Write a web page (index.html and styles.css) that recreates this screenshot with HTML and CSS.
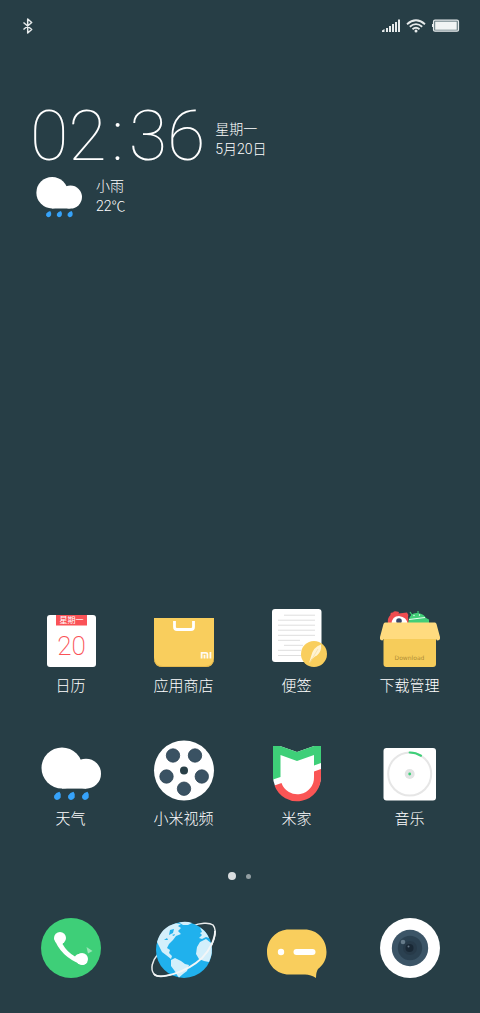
FILE: index.html
```html
<!DOCTYPE html>
<html lang="zh-CN">
<head>
    <meta charset="UTF-8">
    <meta name="viewport" content="width=device-width, initial-scale=1.0">
    <title>桌面</title>
    <link rel="stylesheet" href="styles.css">
</head>
<body>
    <header class="status-bar">
        <svg class="bluetooth" width="12" height="16" viewBox="0 0 12 16">
            <path d="M1.500 4.500 L9.700 11.500 L5.700 15 V1 L9.700 4.500 L1.500 11.500" fill="none" stroke="#e6eaeb" stroke-width="1.500" stroke-linejoin="round"/>
        </svg>
        <div class="status-icons">
            <svg width="19" height="14" viewBox="0 0 19 14" fill="#e6eaeb">
                <path d="M1 13 V11.500 L3.500 10 V13 Z"/>
                <rect x="5" y="9" width="2" height="4"/>
                <rect x="8" y="7" width="2" height="6"/>
                <rect x="11" y="5" width="2" height="8"/>
                <rect x="14" y="3" width="2" height="10"/>
                <rect x="17" y="0.500" width="2" height="12.500"/>
            </svg>
            <svg width="20" height="14" viewBox="0 0 20 14">
                <g fill="none" stroke="#e6eaeb" stroke-width="1.800">
                    <path d="M1 5.200 Q10 -2.600 19 5.200"/>
                    <path d="M3.800 7.800 Q10 2.500 16.200 7.800"/>
                    <path d="M6.500 10.300 Q10 7.300 13.500 10.300"/>
                </g>
                <circle cx="10" cy="12" r="1.500" fill="#e6eaeb"/>
            </svg>
            <svg width="28" height="14" viewBox="0 0 28 14">
                <rect x="0" y="5" width="2" height="3" fill="#e6eaeb"/>
                <rect x="1.500" y="1.200" width="25" height="11" rx="1.500" fill="#6b7f84" stroke="#e6eaeb" stroke-width="1.200"/>
                <rect x="3.200" y="2.700" width="21.500" height="8" fill="#f1f4f4"/>
            </svg>
        </div>
    </header>

    <main>
        <section class="widget">
            <div class="clock-row">
                <time class="clock"><span>02</span><span class="colon">:</span><span>36</span></time>
                <p class="info">星期一<br>5月20日</p>
            </div>
            <div class="weather-row">
                <svg class="weather-icon" viewBox="0 0 60 60">
                    <use href="#rain"/>
                </svg>
                <p class="info">小雨<br>22℃</p>
            </div>
        </section>

        <nav class="apps">
            <a class="app" href="#calendar">
                <svg class="icon" viewBox="0 0 60 60">
                    <rect x="6" y="7" width="49" height="52" rx="3" fill="#fff"/>
                    <rect x="15" y="7" width="31" height="10.500" fill="#fa5257"/>
                    <text class="cal-week" x="30.500" y="15">星期一</text>
                    <text class="cal-day" x="30.500" y="47">20</text>
                </svg>
                <span>日历</span>
            </a>
            <a class="app" href="#store">
                <svg class="icon" viewBox="0 0 60 60">
                    <path d="M0 10 H60 V50 Q60 59 51 59 H9 Q0 59 0 50 Z" fill="#f9ce5d"/>
                    <path d="M0 49 V50 Q0 59 9 59 H51 Q60 59 60 50 V49 Q59 58 51 58 H9 Q1 58 0 49 Z" fill="#e5b94d"/>
                    <path d="M20.500 13 V19 Q20.500 21.500 23 21.500 H37 Q39.500 21.500 39.500 19 V13" fill="none" stroke="#fff" stroke-width="2.800"/>
                    <g fill="none" stroke="#fffaf0" stroke-width="1.800">
                        <path d="M47.600 50.500 V44.800 H52 Q53.400 44.800 53.400 46 V50.500"/>
                        <path d="M50.500 46.800 V50.500 M56.400 44 V50.500"/>
                    </g>
                </svg>
                <span>应用商店</span>
            </a>
            <a class="app" href="#notes">
                <svg class="icon" viewBox="0 0 60 60">
                    <rect x="5" y="1" width="49.500" height="53" rx="3" fill="#fff"/>
                    <path d="M17 7.200 H48 M11 12.200 H48 M11 17.200 H48 M11 22.200 H48 M11 27.300 H48 M11 32.300 H33 M17 37.300 H36 M11 42.300 H34 M11 47.500 H35" stroke="#dedede" stroke-width="1"/>
                    <circle cx="47" cy="46" r="13" fill="#f9ce5d"/>
                    <path d="M42 55 L44 48.500 Q46 39 54 36.500 Q55 43 50 47.500 L48 48.500 Q46 50.500 44.500 51 Z" fill="#fff3d2"/>
                    <path d="M43 54.500 L51 41" stroke="#f4dca0" stroke-width="0.700"/>
                </svg>
                <span>便签</span>
            </a>
            <a class="app" href="#downloads">
                <svg class="icon" viewBox="0 0 60 60">
                    <path d="M8 16 Q7 10 10.500 7 Q10 4 13 4.500 Q14 2.500 17 3.500 L19 4 L18.500 5.500 L27 4.500 Q29 7 28 9 L29 16 Z" fill="#f04c50"/>
                    <path d="M11.500 16 Q12 8 19 8 Q27 9 27.500 16 Z" fill="#fff"/>
                    <circle cx="19" cy="13" r="2.800" fill="#39456a"/>
                    <path d="M28 16 L29 11 Q31 4 38 5 Q44 6 46 10 L49 11.500 V16 Z" fill="#42ce78"/>
                    <path d="M32 7 L30 4 M38 6 L38 3" stroke="#42ce78" stroke-width="1.200"/>
                    <circle cx="34" cy="7.500" r="0.700" fill="#fff"/>
                    <circle cx="39.500" cy="7" r="0.700" fill="#fff"/>
                    <path d="M29 11.500 L45 9.500" stroke="#e9fff1" stroke-width="1"/>
                    <path d="M3.500 28 H56 V56 Q56 59 53 59 H6.500 Q3.500 59 3.500 56 Z" fill="#f6cc5a"/>
                    <path d="M5 14.500 H55 Q56 14.500 56.500 16 L60 29 Q60.500 32.500 57 32.500 L56 31 H3.500 L2.500 32.500 Q-0.500 32.500 0 29 L3.500 16 Q4 14.500 5 14.500 Z" fill="#ffdb7f"/>
                    <text class="box-label" x="29.500" y="52">Download</text>
                </svg>
                <span>下载管理</span>
            </a>
            <a class="app" href="#weather">
                <svg class="icon" viewBox="0 0 60 60">
                    <g id="rain">
                        <circle cx="21" cy="27" r="20.500" fill="#fff"/>
                        <circle cx="45" cy="32.700" r="15" fill="#fff"/>
                        <rect x="21" y="30" width="24" height="17.600" fill="#fff"/>
                        <g fill="#36a3fb">
                            <path id="drop" d="M18.500 50.800 Q20.500 53 19.700 56.500 Q18 59.500 15 58.800 Q12.300 57.500 13.300 54.500 Q15 51.500 18.500 50.800 Z"/>
                            <use href="#drop" x="14"/>
                            <use href="#drop" x="28"/>
                        </g>
                    </g>
                </svg>
                <span>天气</span>
            </a>
            <a class="app" href="#video">
                <svg class="icon" viewBox="0 0 60 60">
                    <circle cx="30" cy="29.500" r="30" fill="#fff"/>
                    <g fill="#3a5263" stroke="#2c4353" stroke-width="0.800">
                        <circle cx="19" cy="14.500" r="6.700"/>
                        <circle cx="41" cy="14.500" r="6.700"/>
                        <circle cx="12.500" cy="35.500" r="6.700"/>
                        <circle cx="47.800" cy="35.500" r="6.700"/>
                        <circle cx="30" cy="47.700" r="6.700"/>
                    </g>
                    <circle cx="30" cy="29.500" r="4" fill="#283f47"/>
                </svg>
                <span>小米视频</span>
            </a>
            <a class="app" href="#home">
                <svg class="icon" viewBox="0 0 60 60">
                    <path d="M6 5 L13 5 L30 11 L47 5 L54 5 V35 A24 24 0 0 1 6 35 Z" fill="#fff"/>
                    <path d="M6 5 H13 L30 11 L47 5 H54 V22 L47 24.500 V14 L30 20 L13.500 14 V36 L6 38.500 Z" fill="#3ecf78"/>
                    <path d="M54 28 V35 A24 24 0 0 1 7.500 44.500 L14.500 42 A16.700 16.700 0 0 0 47 36 V30.500 Z" fill="#fa5555"/>
                </svg>
                <span>米家</span>
            </a>
            <a class="app" href="#music">
                <svg class="icon" viewBox="0 0 60 60">
                    <rect x="3.500" y="7" width="52.500" height="52.500" rx="3" fill="#fff"/>
                    <circle cx="29.700" cy="33" r="21.500" fill="none" stroke="#e6e6e6" stroke-width="2"/>
                    <path d="M29.700 11.500 A21.500 21.500 0 0 1 41 14.700" fill="none" stroke="#3ecf78" stroke-width="2.200" stroke-linecap="round"/>
                    <circle cx="29.700" cy="33" r="5" fill="#e2e4e4"/>
                    <circle cx="29.700" cy="33" r="1.400" fill="#3ecf78"/>
                </svg>
                <span>音乐</span>
            </a>
        </nav>
    </main>

    <div class="pages">
        <span class="page-dot active-dot"></span>
        <span class="page-dot"></span>
    </div>

    <footer class="dock">
        <a class="app" href="#phone" aria-label="电话">
            <svg class="icon" viewBox="0 0 60 60">
                <circle cx="30" cy="30" r="30" fill="#3ecf78"/>
                <circle cx="19" cy="20" r="6" fill="#fff"/>
                <circle cx="41" cy="41" r="6" fill="#fff"/>
                <path d="M13 20 Q19 38 40 46.500 Q44 48 46.500 44 L40 35.500 Q35 36 34 38.500 Q26 34 21.500 26 L24 22 Z" fill="#fff"/>
                <path d="M45.500 29 L51.500 33 L47 35.500 Z" fill="#9be6b8"/>
            </svg>
        </a>
        <a class="app" href="#browser" aria-label="浏览器">
            <svg class="icon" viewBox="0 0 60 60">
                <path d="M4 36 C-2 43 -4 51 0 56 C5 62 32 55 48 40 C60 28 64 13 59 7 C55 4 46 5 38 8" fill="none" stroke="#e9eced" stroke-width="1.500"/>
                <circle cx="30" cy="32" r="28" fill="#20b1ed"/>
                <g fill="#d3effb">
                    <path d="M3 24 Q7 9 22 5.200 L27 6 L24 8 L27 10 L24 13 L27 16 L22 18 L19 22 L15 26 L13 30 L16 32 L15 35 L18 38 L17 41 L12 37 L8 34 L5 28 Z"/>
                    <path d="M25 4.500 Q32 3 38 5 L34 7 L29 7 Z"/>
                    <path d="M17 42 L21 40 L27 43 L31 46 L35 47 L33 53 L29 56 L25 59.500 Q23 58 21.500 54 L17 48 Z"/>
                    <path d="M46 24 L52 21 L57 25 Q59.500 35 55 44 L50 43 L45 41 L42 36 L43 29 Z"/>
                    <path d="M46 9.500 Q52 13 55 20 L52 19 L48 21 L45 20 L48 17 L46 15 L48 14 Z"/>
                </g>
                <path d="M16 12 L20 11 L19 15 L15 17 Z M10 22 L13 20 L14 22 Z M18 17 L21 16 L20 18 Z" fill="#20b1ed"/>
                <path d="M0 56 C5 62 32 55 48 40 C56 32 61 21 61 13" fill="none" stroke="#f3f6f7" stroke-width="1.800"/>
            </svg>
        </a>
        <a class="app" href="#messages" aria-label="短信">
            <svg class="icon" viewBox="0 0 60 60">
                <path d="M22 11.500 H37.500 C50 11.500 59.500 21 59.500 34 C59.500 42 56 47 51 51 Q49 54 49 60 Q44 56.500 38 56.500 H22 C10 56.500 0 47 0 34 C0 21 10 11.500 22 11.500 Z" fill="#f9ce5d"/>
                <circle cx="14" cy="34" r="3.200" fill="#fff"/>
                <rect x="26.500" y="31" width="22" height="6" rx="3" fill="#fff"/>
            </svg>
        </a>
        <a class="app" href="#camera" aria-label="相机">
            <svg class="icon" viewBox="0 0 60 60">
                <circle cx="30" cy="30" r="30" fill="#fff"/>
                <circle cx="30" cy="30" r="18.200" fill="#3c5567"/>
                <circle cx="30" cy="30" r="12.200" fill="#2b4151"/>
                <circle cx="30" cy="30" r="7" fill="#273a49"/>
                <circle cx="29.500" cy="30" r="4" fill="#192835"/>
                <circle cx="23" cy="24" r="2.300" fill="#667b8a"/>
                <circle cx="28.500" cy="28.500" r="1" fill="#647787"/>
            </svg>
        </a>
    </footer>
</body>
</html>
```
FILE: styles.css
```css
* {
    box-sizing: border-box;
}

body {
    font-family: Roboto, "Noto Sans CJK SC", sans-serif;
    background-color: #273e46;
    color: #fff;
    margin: 0;
    min-height: 100vh;
    display: flex;
    flex-direction: column;
}

svg {
    display: block;
    overflow: visible;
}

main {
    flex: 1;
    display: flex;
    flex-direction: column;
    justify-content: space-between;
}

.status-bar {
    display: flex;
    justify-content: space-between;
    align-items: center;
    height: 52px;
    padding: 0 20px 0 22px;
}

.status-icons {
    display: flex;
    gap: 6px;
}

.widget {
    padding: 52px 30px 0;
}

.clock-row {
    display: flex;
    align-items: flex-end;
    gap: 10px;
    height: 64px;
}

.clock {
    display: flex;
    font-size: 70px;
    font-weight: 100;
    line-height: 64px;
}

.colon {
    width: 22px;
    text-align: center;
}

.info {
    margin: 0;
    font-size: 14px;
    font-weight: 300;
    line-height: 20px;
}

.clock-row .info {
    padding-bottom: 9px;
}

.weather-row {
    display: flex;
    align-items: flex-start;
    gap: 14px;
    padding: 4px 0 0 6px;
}

.weather-row .info {
    padding-top: 4px;
}

.weather-icon {
    width: 46px;
    height: 46px;
}

.apps,
.dock {
    display: grid;
    grid-template-columns: repeat(4, 1fr);
    padding: 0 14px;
}

.apps {
    row-gap: 44px;
    padding-bottom: 42px;
}

.app {
    display: flex;
    flex-direction: column;
    align-items: center;
    gap: 7px;
    color: #fff;
    font-size: 15px;
    font-weight: 300;
    line-height: 22px;
    text-decoration: none;
}

.icon {
    width: 60px;
    height: 60px;
}

.cal-week {
    font-size: 8px;
    font-weight: 400;
    fill: #fff;
    text-anchor: middle;
}

.cal-day {
    font-size: 26px;
    font-weight: 200;
    fill: #fa5257;
    text-anchor: middle;
}

.box-label {
    font-family: "DejaVu Sans", sans-serif;
    font-size: 6px;
    font-weight: 400;
    fill: #b08c35;
    text-anchor: middle;
}

.pages {
    display: flex;
    justify-content: center;
    align-items: center;
    gap: 10px;
    height: 8px;
    margin-bottom: 38px;
    padding-right: 2px;
}

.page-dot {
    width: 5px;
    height: 5px;
    border-radius: 50%;
    background-color: #939fa3;
}

.active-dot {
    width: 8px;
    height: 8px;
    background-color: #d9dddf;
}

.dock {
    padding-bottom: 35px;
}
```
